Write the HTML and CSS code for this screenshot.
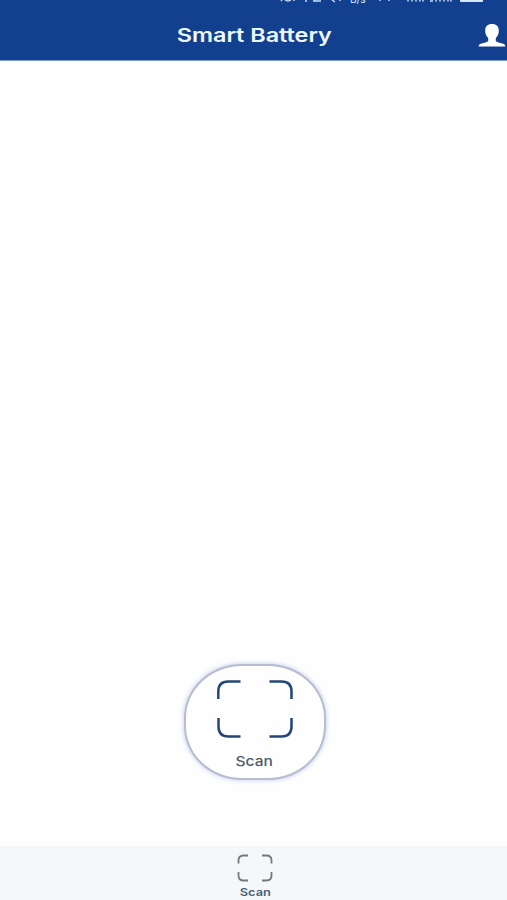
FILE: index.html
```
<!DOCTYPE html>
<html lang="en">
<head>
  <meta charset="UTF-8" />
  <meta name="viewport" content="width=device-width, initial-scale=1.0" />
  <title>Smart Battery</title>
  <link rel="stylesheet" href="styles.css">
</head>
<body>
  <header>
    <!-- bottom edge of the status bar -->
    <svg class="status" viewBox="0 0 507 8">
      <g fill="none" stroke="#c5dcfb" stroke-width="1.5">
        <path d="M281 0l1 1M285 0q3 2 6 0M294 0v1M306 0v2M313 1h8M315 0v1M332 0l3 2M340 0v1M380 0v1M389 0v1" />
        <path d="M408 0v1.500M412 0v1.500M416 0v1.500M420 0v1.500M423 0v1.500M430 1h3M436 0v1.500M440 0v1.500M444 0v1.500M448 0v1.500M451 0v1.500" />
      </g>
      <text x="350" y="3">B/s</text>
      <path fill="#d5e8fc" d="M460 0h23v1q0 1-1 1h-21q-1 0-1-1z" />
    </svg>
    <h1>Smart Battery</h1>
    <svg class="user" viewBox="0 0 28 24">
      <path d="M14 0c4.500 0 6.800 2.500 6.800 6.500 0 3.500-1 5.500-3 7.500v3c1.300 1.500 5.500 2 7.500 2.800 1.500.7 2 1.600 2 2.700H.7c0-1.100.5-2 2-2.700 2-.8 6.200-1.300 7.500-2.800v-3C8.200 12 7.200 10 7.200 6.500 7.200 2.500 9.500 0 14 0z" />
    </svg>
  </header>

  <main>
    <button class="scan">
      <svg viewBox="0 0 76 58">
        <path d="M1.300 19v-7.500q0-10 10-10H23.500M52.500 1.500h12q10 0 10 10V19M74.500 38v8.500q0 10-10 10h-12M23.500 56.500h-12q-10 0-10-10V38" />
      </svg>
      <span>Scan</span>
    </button>
  </main>

  <nav>
    <svg viewBox="0 0 36 28">
      <path d="M1.500 9.500V6.500q0-5 5-5H11M25 1.500h4.500q5 0 5 5v3M34.500 18v3.500q0 5-5 5H25M11 26.500H6.500q-5 0-5-5V18" />
    </svg>
    <span>Scan</span>
  </nav>
</body>
</html>
```
FILE: styles.css
```
body {
  margin: 0;
  height: 900px;
  display: flex;
  flex-direction: column;
  overflow: hidden;
  background: #fefefe;
  font-family: Inter, "Liberation Sans", sans-serif;
}
header {
  position: relative;
  box-sizing: border-box;
  height: 61px;
  padding-top: 12px;
  background: #12408f;
  border-bottom: 1px solid #7f9bc7;
  display: flex;
  justify-content: center;
  align-items: center;
}
.status {
  position: absolute;
  top: 0;
  left: 0;
  width: 507px;
  height: 8px;
}
.status text {
  fill: #c5dcfb;
  font-size: 10px;
  font-weight: 500;
}
h1 {
  margin: 0;
  padding-left: 2px;
  color: #edf8ff;
  font-size: 19px;
  font-weight: 600;
  line-height: 24px;
  transform: scaleX(1.23);
}
.user {
  position: absolute;
  right: 1px;
  top: 24px;
  width: 28px;
  height: 24px;
  fill: #fff;
}
main {
  flex: 1;
  display: flex;
  justify-content: center;
  align-items: flex-end;
  padding: 0 0 66px 2px;
}
.scan {
  box-sizing: border-box;
  width: 142px;
  height: 116px;
  padding: 14px 0 0;
  border: 2px solid #b9bccf;
  border-radius: 58px / 54px;
  background: #fefefe;
  box-shadow: 0 0 5px #b9c9ee;
  display: flex;
  flex-direction: column;
  align-items: center;
  justify-content: flex-start;
  font-family: inherit;
}
.scan svg {
  flex: none;
  width: 76px;
  height: 58px;
  fill: none;
  stroke: #234679;
  stroke-width: 2.5;
}
.scan span {
  margin-top: 14px;
  color: #515b69;
  font-size: 13.5px;
  font-weight: 500;
  line-height: 18px;
  transform: scaleX(1.15);
}
nav {
  box-sizing: border-box;
  height: 54px;
  padding: 8px 0 0 3px;
  background: #f6f7f9;
  display: flex;
  flex-direction: column;
  align-items: center;
}
nav svg {
  width: 36px;
  height: 28px;
  fill: none;
  stroke: #737a7e;
  stroke-width: 1.8;
}
nav span {
  margin-top: 3px;
  color: #4b6474;
  font-size: 11px;
  font-weight: 600;
  line-height: 14px;
  transform: scaleX(1.17);
}
```
